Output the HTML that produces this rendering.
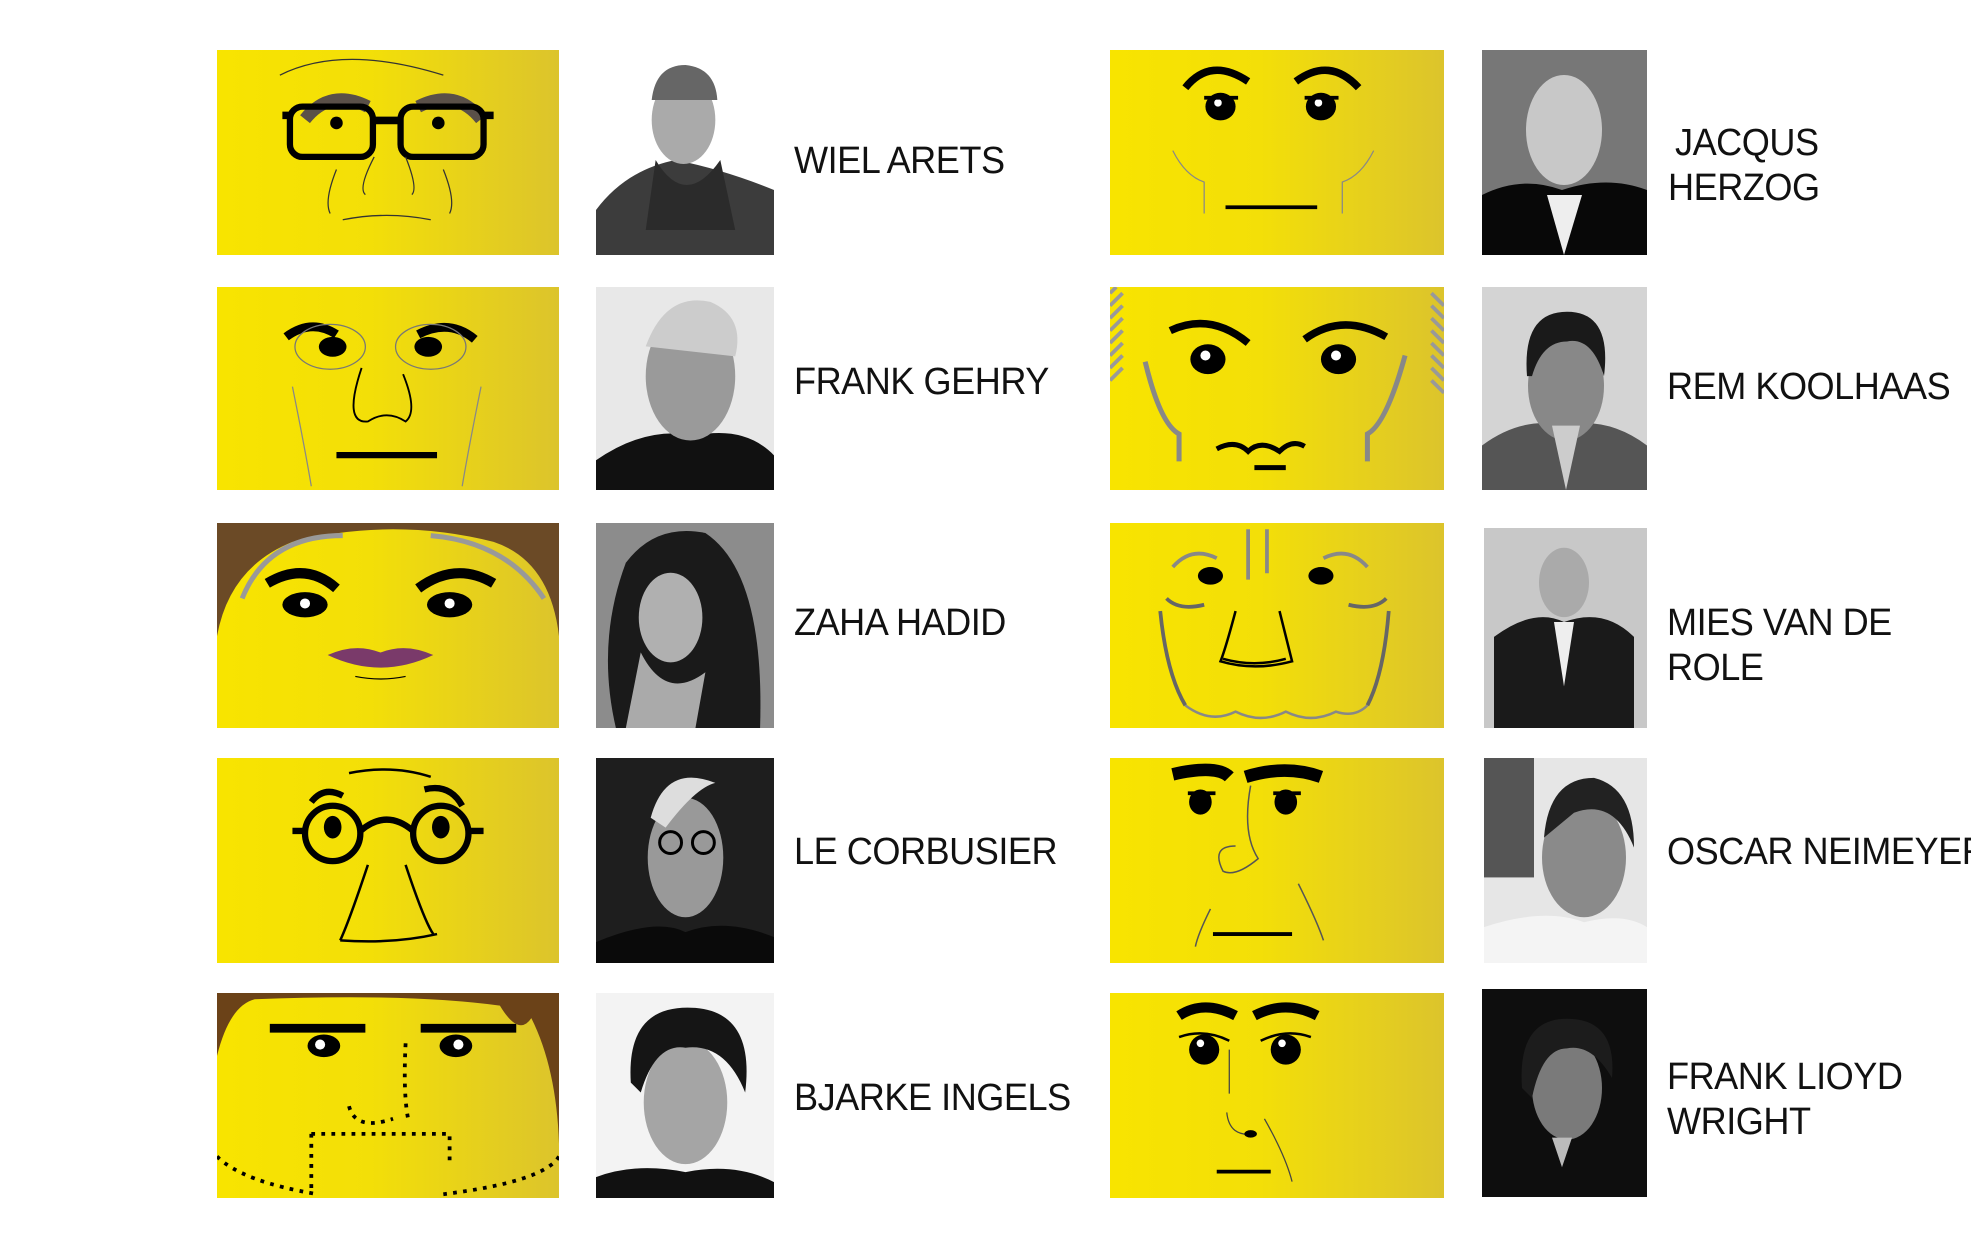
<!DOCTYPE html>
<html><head><meta charset="utf-8"><style>
html,body{margin:0;padding:0;background:#fff;width:1971px;height:1250px;overflow:hidden;position:relative}
.c{position:absolute;background:linear-gradient(90deg,#f8e400 0%,#f3df08 45%,#dcc42c 100%);overflow:hidden}
.c svg,.p svg{width:100%;height:100%;display:block}
.p{position:absolute;overflow:hidden}
.t{position:absolute;font-family:"Liberation Sans",sans-serif;font-size:38px;line-height:45px;color:#111;transform:scaleX(.95);transform-origin:left center;white-space:nowrap;letter-spacing:-0.5px}
</style></head><body>

<div class="c" style="left:217px;top:50px;width:342px;height:205px"><svg viewBox="0 0 272 163" preserveAspectRatio="none">
<path d="M70 55 Q90 30 120 45 M160 45 Q190 30 210 55" stroke="#5a5048" stroke-width="10" fill="none"/>
<rect x="58" y="45" width="66" height="40" rx="10" fill="none" stroke="#000" stroke-width="5"/>
<rect x="146" y="45" width="66" height="40" rx="10" fill="none" stroke="#000" stroke-width="5"/>
<path d="M124 56 H146 M52 52 H58 M212 52 H220" stroke="#000" stroke-width="6"/>
<circle cx="95" cy="58" r="5"/><circle cx="176" cy="58" r="5"/>
<path d="M125 85 Q112 110 118 115 M150 85 Q160 110 155 115 M95 95 Q85 120 90 130 M180 95 Q190 120 185 130 M100 135 Q135 128 170 135 M50 20 Q100 -5 180 20" stroke="#333" stroke-width="1" fill="none"/>
</svg></div>
<div class="c" style="left:217px;top:287px;width:342px;height:203px"><svg viewBox="0 0 272 163" preserveAspectRatio="none">
<path d="M55 40 Q75 25 95 38 M160 38 Q185 25 205 42" stroke="#000" stroke-width="7" fill="none"/>
<ellipse cx="92" cy="48" rx="11" ry="8"/><ellipse cx="168" cy="48" rx="11" ry="8"/>
<ellipse cx="90" cy="48" rx="28" ry="18" fill="none" stroke="#777"/><ellipse cx="170" cy="48" rx="28" ry="18" fill="none" stroke="#777"/>
<path d="M115 65 Q100 110 120 108 Q135 98 150 108 Q160 100 148 70" stroke="#000" stroke-width="1.5" fill="none"/>
<path d="M95 135 H175" stroke="#000" stroke-width="5"/>
<path d="M60 80 Q70 130 75 160 M210 80 Q200 130 195 160" stroke="#888" fill="none"/>
</svg></div>
<div class="c" style="left:217px;top:523px;width:342px;height:205px"><svg viewBox="0 0 272 163" preserveAspectRatio="none">
<path d="M0 0 H272 V90 Q265 30 220 15 Q140 -5 60 15 Q10 35 0 90Z" fill="#6b4a26"/>
<path d="M20 60 Q40 10 100 10 M170 10 Q230 15 260 60" stroke="#999" stroke-width="4" fill="none"/>
<path d="M40 48 Q70 30 95 52 M160 52 Q190 30 220 48" stroke="#000" stroke-width="8" fill="none"/>
<ellipse cx="70" cy="65" rx="18" ry="10"/><ellipse cx="185" cy="65" rx="18" ry="10"/>
<circle cx="70" cy="64" r="4" fill="#fff"/><circle cx="185" cy="64" r="4" fill="#fff"/>
<path d="M88 105 Q110 95 130 103 Q150 95 172 105 Q130 125 88 105Z" fill="#7a3a6a"/>
<path d="M110 122 Q130 126 150 122" stroke="#000" fill="none"/>
</svg></div>
<div class="c" style="left:217px;top:758px;width:342px;height:205px"><svg viewBox="0 0 272 163" preserveAspectRatio="none">
<circle cx="92" cy="60" r="22" fill="none" stroke="#000" stroke-width="5"/><circle cx="178" cy="60" r="22" fill="none" stroke="#000" stroke-width="5"/>
<path d="M114 58 Q135 40 156 58 M70 58 H60 M200 58 H212" stroke="#000" stroke-width="5" fill="none"/>
<ellipse cx="92" cy="55" rx="7" ry="9"/><ellipse cx="178" cy="55" rx="7" ry="9"/>
<path d="M75 35 Q85 22 100 30 M165 25 Q185 20 195 38" stroke="#000" stroke-width="5" fill="none"/>
<path d="M120 85 Q105 130 98 145 M150 85 Q165 130 172 140 M98 145 Q140 148 175 140 M105 12 Q140 5 170 15" stroke="#000" stroke-width="2" fill="none"/>
</svg></div>
<div class="c" style="left:217px;top:993px;width:342px;height:205px"><svg viewBox="0 0 272 163" preserveAspectRatio="none">
<path d="M0 0 H272 V120 Q270 60 250 20 Q240 35 225 10 Q150 0 30 5 Q10 10 0 50Z" fill="#6b4218"/>
<path d="M42 28 H118 M162 28 H238" stroke="#000" stroke-width="7"/>
<ellipse cx="85" cy="42" rx="13" ry="9"/><ellipse cx="190" cy="42" rx="13" ry="9"/>
<circle cx="82" cy="41" r="4" fill="#fff"/><circle cx="192" cy="41" r="4" fill="#fff"/>
<path d="M150 40 Q148 80 152 100 M105 90 Q110 110 140 100 M75 112 H185 V135 M75 112 V160 M0 130 Q20 150 80 160 M272 130 Q260 150 180 160" stroke="#000" stroke-width="3" stroke-dasharray="3 5" fill="none"/>
</svg></div>

<div class="p" style="left:596px;top:50px;width:178px;height:205px;background:#fff"><svg viewBox="0 0 179 205" preserveAspectRatio="none">
<path d="M0 205 V160 Q30 120 80 110 Q130 120 179 140 V205Z" fill="#3c3c3c"/><ellipse cx="88" cy="70" rx="32" ry="44" fill="#aaa"/><path d="M56 50 Q60 15 90 15 Q120 18 122 50" fill="#666"/><path d="M60 110 Q90 160 125 110 L140 180 H50Z" fill="#2b2b2b"/></svg></div>
<div class="p" style="left:596px;top:287px;width:178px;height:203px;background:#e8e8e8"><svg viewBox="0 0 179 205" preserveAspectRatio="none">
<path d="M0 205 V175 Q50 140 100 150 Q150 140 179 170 V205Z" fill="#111"/><ellipse cx="95" cy="90" rx="45" ry="65" fill="#9a9a9a"/><path d="M50 60 Q70 5 115 15 Q150 30 140 70" fill="#ccc"/></svg></div>
<div class="p" style="left:596px;top:523px;width:178px;height:205px;background:#8c8c8c"><svg viewBox="0 0 179 206" preserveAspectRatio="none">
<path d="M30 40 Q60 0 110 10 Q170 50 165 206 H20 Q0 120 30 40Z" fill="#1a1a1a"/><ellipse cx="75" cy="95" rx="32" ry="45" fill="#b0b0b0"/><path d="M45 130 Q70 180 110 150 L100 206 H30Z" fill="#aaa"/></svg></div>
<div class="p" style="left:596px;top:758px;width:178px;height:205px;background:#1e1e1e"><svg viewBox="0 0 179 206" preserveAspectRatio="none">
<ellipse cx="90" cy="100" rx="38" ry="60" fill="#999"/><path d="M55 60 Q70 5 120 25 Q100 30 70 70Z" fill="#ddd"/><circle cx="75" cy="85" r="11" fill="none" stroke="#000" stroke-width="3"/><circle cx="108" cy="85" r="11" fill="none" stroke="#000" stroke-width="3"/><path d="M0 206 V185 Q60 160 90 175 Q130 160 179 180 V206Z" fill="#0a0a0a"/></svg></div>
<div class="p" style="left:596px;top:993px;width:178px;height:205px;background:#f3f3f3"><svg viewBox="0 0 179 206" preserveAspectRatio="none">
<path d="M0 206 V185 Q40 170 90 180 Q140 170 179 190 V206Z" fill="#111"/><ellipse cx="90" cy="110" rx="42" ry="62" fill="#a5a5a5"/><path d="M35 90 Q30 10 100 15 Q160 20 150 100 Q130 50 90 55 Q60 50 45 100Z" fill="#151515"/></svg></div>

<div class="t" style="left:794px;top:139px">WIEL ARETS</div>
<div class="t" style="left:794px;top:360px">FRANK GEHRY</div>
<div class="t" style="left:794px;top:601px">ZAHA HADID</div>
<div class="t" style="left:794px;top:830px">LE CORBUSIER</div>
<div class="t" style="left:794px;top:1076px">BJARKE INGELS</div>

<div class="c" style="left:1110px;top:50px;width:334px;height:205px"><svg viewBox="0 0 266 163" preserveAspectRatio="none">
<path d="M60 30 Q80 5 110 25 M148 25 Q175 5 198 30" stroke="#000" stroke-width="6" fill="none"/>
<ellipse cx="88" cy="45" rx="12" ry="11"/><ellipse cx="168" cy="45" rx="12" ry="11"/><circle cx="86" cy="42" r="3" fill="#fff"/><circle cx="166" cy="42" r="3" fill="#fff"/>
<path d="M75 38 H102 M155 38 H182" stroke="#000" stroke-width="3"/>
<path d="M92 125 H165" stroke="#000" stroke-width="3"/><path d="M50 80 Q60 100 75 105 V130 M210 80 Q200 100 185 105 V130" stroke="#888" fill="none"/></svg></div>
<div class="c" style="left:1110px;top:287px;width:334px;height:203px"><svg viewBox="0 0 266 163" preserveAspectRatio="none">
<path d="M0 5 L5 0 M0 15 L10 5 M0 25 L10 15 M0 35 L10 25 M0 45 L10 35 M0 55 L10 45 M0 65 L10 55 M0 75 L10 65 M256 5 L266 15 M256 15 L266 25 M256 25 L266 35 M256 35 L266 45 M256 45 L266 55 M256 55 L266 65 M256 65 L266 75 M256 75 L266 85" stroke="#999" stroke-width="3"/>
<path d="M48 35 Q80 20 110 45 M155 42 Q185 20 220 40" stroke="#000" stroke-width="6" fill="none"/>
<ellipse cx="78" cy="58" rx="14" ry="12"/><ellipse cx="182" cy="58" rx="14" ry="12"/><circle cx="76" cy="55" r="4" fill="#fff"/><circle cx="180" cy="55" r="4" fill="#fff"/>
<path d="M28 60 Q40 110 55 118 V140 M235 55 Q220 110 205 118 V140" stroke="#888" stroke-width="4" fill="none"/>
<path d="M85 130 Q100 122 110 132 Q120 122 135 132 Q145 122 155 128 M115 145 H140" stroke="#000" stroke-width="4" fill="none"/></svg></div>
<div class="c" style="left:1110px;top:523px;width:334px;height:205px"><svg viewBox="0 0 266 163" preserveAspectRatio="none">
<path d="M50 35 Q65 18 85 28 M170 28 Q190 18 205 35 M110 5 V45 M125 5 V40" stroke="#888" stroke-width="3" fill="none"/>
<ellipse cx="80" cy="42" rx="10" ry="7"/><ellipse cx="168" cy="42" rx="10" ry="7"/>
<path d="M45 60 Q55 70 75 65 M190 65 Q210 70 220 60 M40 70 Q45 120 60 145 M222 70 Q218 120 205 145" stroke="#666" stroke-width="3" fill="none"/>
<path d="M100 70 Q92 100 88 110 Q115 118 145 110 Q140 90 135 70 M90 108 Q115 115 140 108" stroke="#000" stroke-width="2" fill="none"/>
<path d="M60 145 Q80 160 100 150 Q120 160 140 150 Q160 160 180 150 Q195 155 205 145" stroke="#888" stroke-width="2" fill="none"/></svg></div>
<div class="c" style="left:1110px;top:758px;width:334px;height:205px"><svg viewBox="0 0 266 163" preserveAspectRatio="none">
<path d="M50 13 Q85 5 95 15 M108 15 Q140 5 168 15" stroke="#000" stroke-width="10" fill="none"/>
<ellipse cx="72" cy="35" rx="9" ry="10"/><ellipse cx="140" cy="35" rx="9" ry="10"/><path d="M62 28 H84 M130 28 H152" stroke="#000" stroke-width="3"/>
<path d="M112 22 Q105 60 118 80 Q100 95 90 90 Q80 70 100 70 M80 120 Q70 140 68 150 M150 100 Q165 130 170 145" stroke="#555" stroke-width="1.2" fill="none"/>
<path d="M82 140 H145" stroke="#000" stroke-width="3"/></svg></div>
<div class="c" style="left:1110px;top:993px;width:334px;height:205px"><svg viewBox="0 0 266 163" preserveAspectRatio="none">
<path d="M55 18 Q75 5 100 18 M115 18 Q140 5 165 18" stroke="#000" stroke-width="8" fill="none"/>
<ellipse cx="75" cy="45" rx="12" ry="12"/><ellipse cx="140" cy="45" rx="12" ry="12"/><circle cx="72" cy="40" r="3" fill="#fff"/><circle cx="137" cy="40" r="3" fill="#fff"/>
<path d="M55 35 Q75 28 95 38 M120 38 Q140 28 160 35" stroke="#000" stroke-width="2" fill="none"/>
<path d="M95 45 V80 M93 95 Q95 115 115 112 M123 100 Q140 130 145 150" stroke="#444" stroke-width="1" fill="none"/>
<ellipse cx="112" cy="112" rx="5" ry="3"/><path d="M85 142 H128" stroke="#000" stroke-width="3"/></svg></div>

<div class="p" style="left:1482px;top:50px;width:165px;height:205px;background:#777"><svg viewBox="0 0 165 205" preserveAspectRatio="none">
<path d="M0 205 V145 Q40 125 80 140 Q125 125 165 140 V205Z" fill="#080808"/><ellipse cx="82" cy="80" rx="38" ry="55" fill="#c8c8c8"/><path d="M65 145 L82 205 L100 145Z" fill="#eee"/></svg></div>
<div class="p" style="left:1482px;top:287px;width:165px;height:203px;background:#d4d4d4"><svg viewBox="0 0 165 205" preserveAspectRatio="none">
<path d="M0 205 V160 Q40 130 82 140 Q125 130 165 160 V205Z" fill="#555"/><ellipse cx="84" cy="100" rx="38" ry="55" fill="#888"/><path d="M45 90 Q40 25 85 25 Q130 25 122 90 Q110 50 85 55 Q60 55 50 90Z" fill="#1a1a1a"/><path d="M70 140 L84 205 L98 140Z" fill="#ccc"/></svg></div>
<div class="p" style="left:1484px;top:528px;width:163px;height:200px;background:#c8c8c8"><svg viewBox="0 0 163 202" preserveAspectRatio="none">
<path d="M10 202 V110 Q50 80 80 95 Q120 80 150 110 V202Z" fill="#1a1a1a"/><ellipse cx="80" cy="55" rx="25" ry="35" fill="#aaa"/><path d="M70 95 L80 160 L90 95Z" fill="#eee"/></svg></div>
<div class="p" style="left:1484px;top:758px;width:163px;height:205px;background:#e6e6e6"><svg viewBox="0 0 163 206" preserveAspectRatio="none">
<rect width="50" height="120" fill="#555"/><ellipse cx="100" cy="100" rx="42" ry="60" fill="#8a8a8a"/><path d="M60 80 Q65 20 110 20 Q150 30 150 90 Q130 40 90 55Z" fill="#222"/><path d="M0 206 V170 Q60 150 100 165 Q140 155 163 170 V206Z" fill="#f4f4f4"/></svg></div>
<div class="p" style="left:1482px;top:989px;width:165px;height:208px;background:#0e0e0e"><svg viewBox="0 0 165 210" preserveAspectRatio="none">
<ellipse cx="85" cy="100" rx="35" ry="52" fill="#7a7a7a"/><path d="M40 100 Q35 30 85 30 Q135 30 130 90 Q110 55 85 60 Q60 60 50 110Z" fill="#1c1c1c"/><path d="M70 150 L80 180 L90 150" fill="#bbb"/></svg></div>

<div class="t" style="left:1675px;top:121px">JACQUS</div>
<div class="t" style="left:1668px;top:166px">HERZOG</div>
<div class="t" style="left:1667px;top:365px">REM KOOLHAAS</div>
<div class="t" style="left:1667px;top:601px">MIES VAN DE</div>
<div class="t" style="left:1667px;top:646px">ROLE</div>
<div class="t" style="left:1667px;top:830px">OSCAR NEIMEYER</div>
<div class="t" style="left:1667px;top:1055px">FRANK LIOYD</div>
<div class="t" style="left:1667px;top:1100px">WRIGHT</div>
</body></html>
